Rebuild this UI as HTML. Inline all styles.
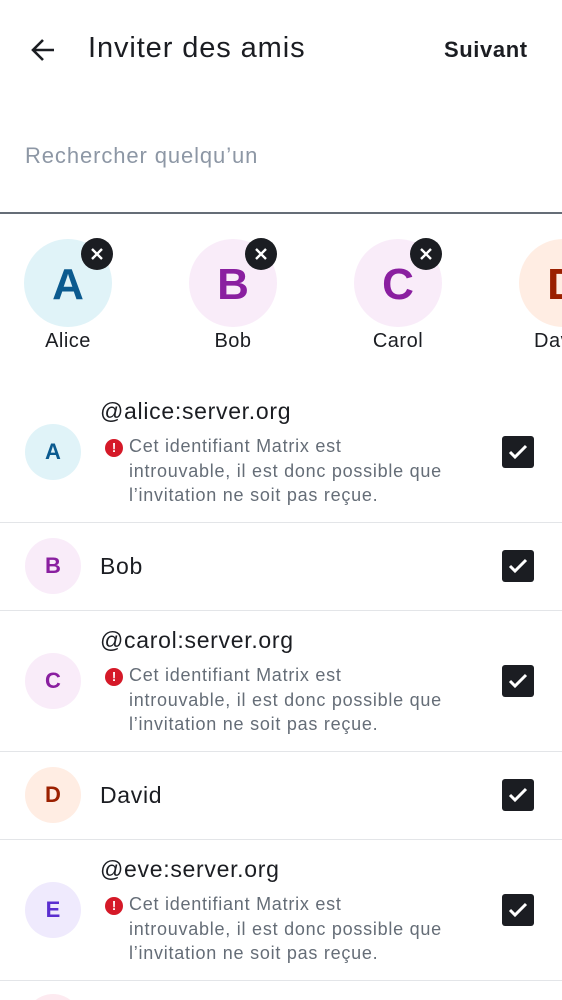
<!DOCTYPE html>
<html><head><meta charset="utf-8"><style>
*{margin:0;padding:0;box-sizing:border-box}
html,body{width:562px;height:1000px;overflow:hidden}
body{background:#fff;font-family:"Liberation Sans",sans-serif;color:#1b1d22;position:relative}
.abs{position:absolute}
.sel{position:absolute;top:239px;width:88px;height:88px;border-radius:50%;display:flex;align-items:center;justify-content:center;font-size:44px;font-weight:bold;padding-top:4px}
.x{position:absolute;top:238px;width:32px;height:32px;border-radius:50%;background:#1b1d22;border:0}
.nm{position:absolute;top:330px;width:140px;text-align:center;font-size:20px;letter-spacing:0.5px}
.row{position:absolute;left:0;width:562px;border-bottom:1px solid #e3e5e8}
.av{position:absolute;left:25px;width:56px;height:56px;border-radius:50%;display:flex;align-items:center;justify-content:center;font-size:22px;font-weight:bold}
.cb{position:absolute;left:502px;width:32px;height:32px;border-radius:3px;background:#1b1d22}
.t{position:absolute;left:100px;font-size:23px;letter-spacing:0.7px}
.err{position:absolute;left:129px;font-size:18px;line-height:24.5px;color:#656d77;letter-spacing:0.75px}
.ei{position:absolute;left:105px;width:18px;height:18px;border-radius:50%;background:#d51928;color:#fff;font-size:13px;font-weight:bold;text-align:center;line-height:18px}
</style></head><body>
<svg class="abs" style="left:30px;top:38px" width="26" height="24" viewBox="0 0 26 24"><path d="M24 12H4M13 2L3 12l10 10" stroke="#1b1d22" stroke-width="2.6" fill="none"/></svg>
<div class="abs" style="left:88px;top:32px;font-size:29px;letter-spacing:0.9px">Inviter des amis</div>
<div class="abs" style="left:444px;top:37px;font-size:22px;font-weight:bold;letter-spacing:0.6px">Suivant</div>
<div class="abs" style="left:25px;top:143px;font-size:22px;color:#8d97a5;letter-spacing:0.9px">Rechercher quelqu’un</div>
<div class="abs" style="left:0;top:212px;width:562px;height:1.5px;background:#656d77"></div>

<div class="sel" style="left:24px;background:#e0f3f8;color:#0b5a8f">A</div>
<div class="sel" style="left:189px;background:#f9ecf9;color:#8a1fa0">B</div>
<div class="sel" style="left:354px;background:#f9ecf9;color:#8a1fa0">C</div>
<div class="sel" style="left:519px;background:#ffede3;color:#9b2000">D</div>
<svg class="x" style="left:81px" viewBox="0 0 32 32"><path d="M11 11l10 10M21 11L11 21" stroke="#fff" stroke-width="2.4"/></svg>
<svg class="x" style="left:245px" viewBox="0 0 32 32"><path d="M11 11l10 10M21 11L11 21" stroke="#fff" stroke-width="2.4"/></svg>
<svg class="x" style="left:410px" viewBox="0 0 32 32"><path d="M11 11l10 10M21 11L11 21" stroke="#fff" stroke-width="2.4"/></svg>
<div class="nm" style="left:-2px">Alice</div>
<div class="nm" style="left:163px">Bob</div>
<div class="nm" style="left:328px">Carol</div>
<div class="nm" style="left:493px;text-align:left;padding-left:41px">David</div>

<div class="row" style="top:390px;height:133px"></div>
<div class="row" style="top:523px;height:88px"></div>
<div class="row" style="top:611px;height:141px"></div>
<div class="row" style="top:752px;height:88px"></div>
<div class="row" style="top:840px;height:141px"></div>

<div class="av" style="top:424px;background:#e0f3f8;color:#0b5a8f">A</div>
<div class="t" style="top:398px">@alice:server.org</div>
<div class="ei" style="top:439px">!</div>
<div class="err" style="top:434px">Cet identifiant Matrix est<br>introuvable, il est donc possible que<br>l’invitation ne soit pas reçue.</div>
<div class="av" style="top:538px;background:#f9ecf9;color:#8a1fa0">B</div>
<div class="t" style="top:553px">Bob</div>
<div class="av" style="top:653px;background:#f9ecf9;color:#8a1fa0">C</div>
<div class="t" style="top:627px">@carol:server.org</div>
<div class="ei" style="top:668px">!</div>
<div class="err" style="top:663px">Cet identifiant Matrix est<br>introuvable, il est donc possible que<br>l’invitation ne soit pas reçue.</div>
<div class="av" style="top:767px;background:#ffede3;color:#9b2000">D</div>
<div class="t" style="top:782px">David</div>
<div class="av" style="top:882px;background:#efeafd;color:#5a2ed0">E</div>
<div class="t" style="top:856px">@eve:server.org</div>
<div class="ei" style="top:897px">!</div>
<div class="err" style="top:892px">Cet identifiant Matrix est<br>introuvable, il est donc possible que<br>l’invitation ne soit pas reçue.</div>
<div class="abs" style="left:25px;top:994px;width:56px;height:6px;overflow:hidden"><div style="width:56px;height:56px;border-radius:50%;background:#fdeaf0"></div></div>

<svg class="cb" style="top:436px" viewBox="0 0 32 32"><path d="M8 16l5 5 11-11" stroke="#fff" stroke-width="3" fill="none"/></svg>
<svg class="cb" style="top:550px" viewBox="0 0 32 32"><path d="M8 16l5 5 11-11" stroke="#fff" stroke-width="3" fill="none"/></svg>
<svg class="cb" style="top:665px" viewBox="0 0 32 32"><path d="M8 16l5 5 11-11" stroke="#fff" stroke-width="3" fill="none"/></svg>
<svg class="cb" style="top:779px" viewBox="0 0 32 32"><path d="M8 16l5 5 11-11" stroke="#fff" stroke-width="3" fill="none"/></svg>
<svg class="cb" style="top:894px" viewBox="0 0 32 32"><path d="M8 16l5 5 11-11" stroke="#fff" stroke-width="3" fill="none"/></svg>
</body></html>
